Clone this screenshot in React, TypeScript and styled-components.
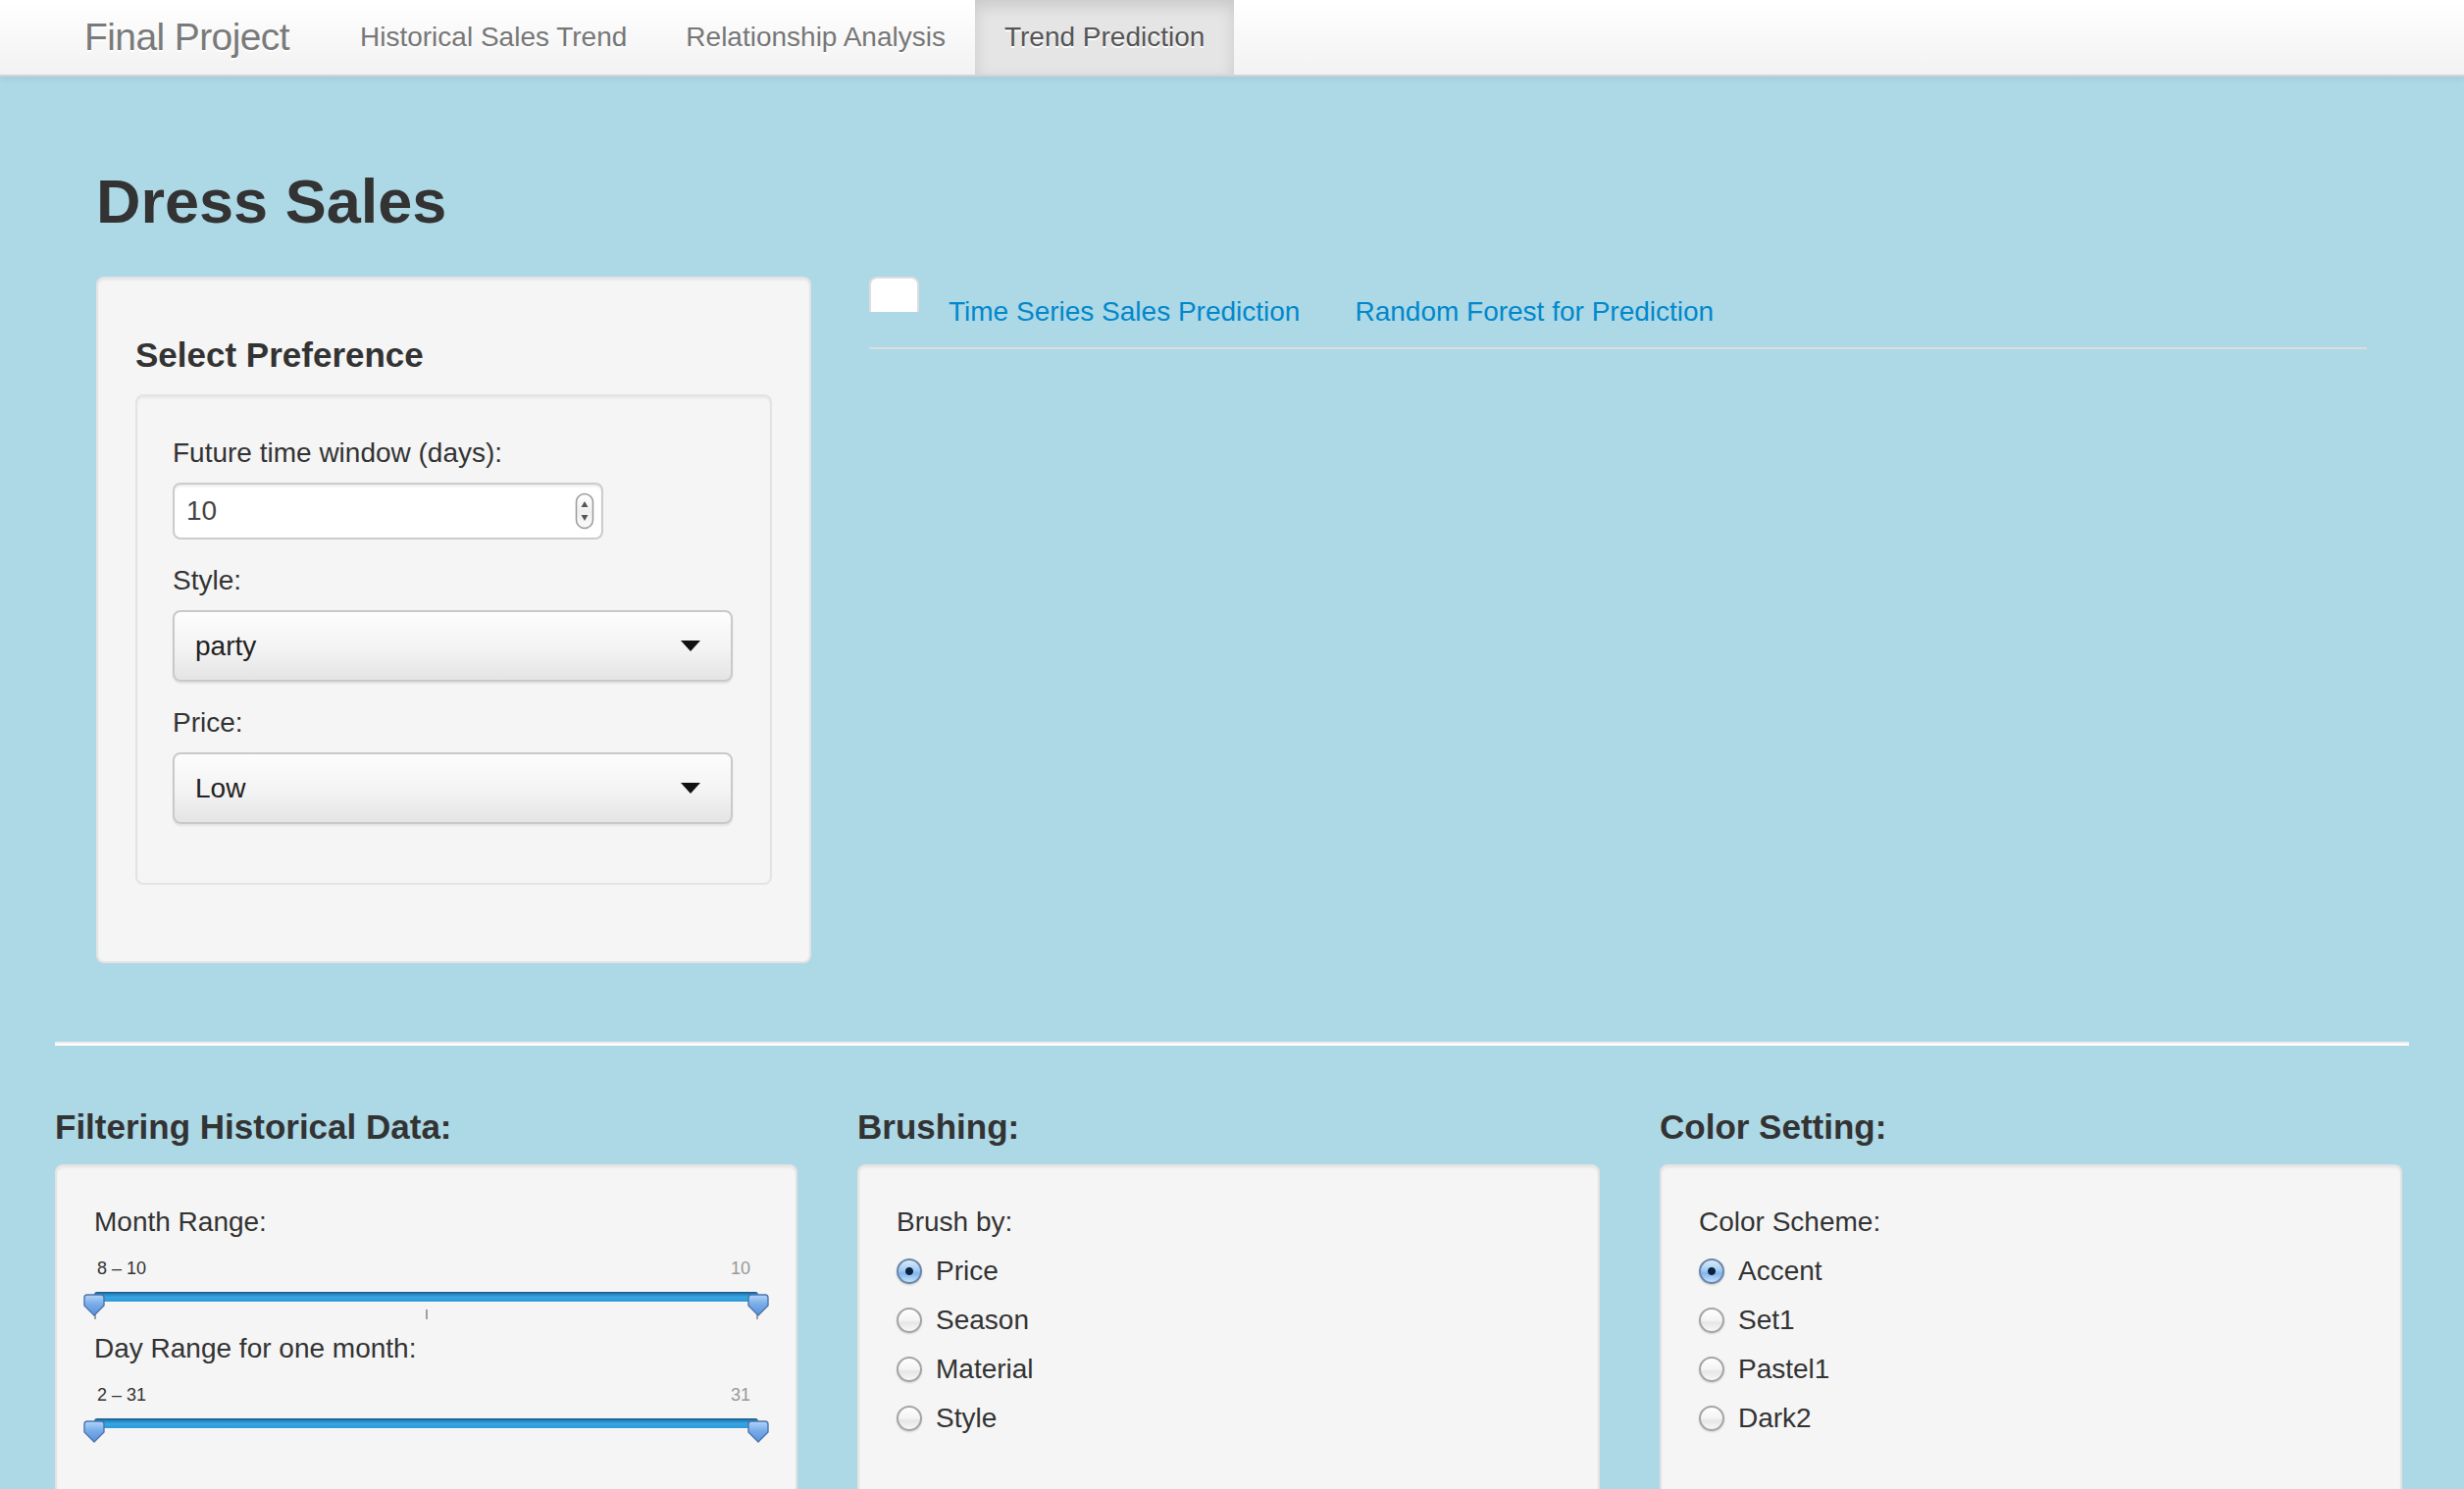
import React from "react";
import styled, { createGlobalStyle, css } from "styled-components";

const GlobalStyle = createGlobalStyle`
  html, body { margin: 0; padding: 0; overflow: hidden; }
  body {
    background: #add8e6;
    font-family: "Liberation Sans", Arial, Helvetica, sans-serif;
    font-size: 28px;
    line-height: 40px;
    color: #333;
  }
  *, *::before, *::after { box-sizing: border-box; }
`;

/* ---------- Navbar ---------- */
const Navbar = styled.header`
  height: 78px;
  background: linear-gradient(to bottom, #ffffff, #f2f2f2);
  border-bottom: 2px solid #d4d4d4;
  box-shadow: 0 2px 8px rgba(0, 0, 0, 0.065);
  display: flex;
  align-items: stretch;
  padding-left: 86px;
`;

const Brand = styled.a`
  width: 251px;
  display: flex;
  align-items: center;
  font-size: 39px;
  color: #7a7a7a;
  text-shadow: 0 2px 0 #fff;
  letter-spacing: -0.6px;
`;

const NavList = styled.nav`
  display: flex;
  align-items: stretch;
`;

const NavLink = styled.a<{ $active?: boolean }>`
  display: flex;
  align-items: center;
  padding: 0 30px;
  font-size: 28px;
  color: #777;
  text-shadow: 0 2px 0 #fff;
  ${(p) =>
    p.$active &&
    css`
      color: #555;
      background: #e5e5e5;
      box-shadow: inset 0 6px 16px rgba(0, 0, 0, 0.125);
    `}
`;

/* ---------- Layout ---------- */
const Page = styled.main`
  padding: 0 56px;
`;

const TopSection = styled.section`
  padding: 87px 43px 0 42px;
`;

const Title = styled.h2`
  margin: 0 0 37px;
  font-size: 63px;
  line-height: 80px;
  font-weight: bold;
  color: #333;
`;

const SidebarLayout = styled.div`
  display: grid;
  grid-template-columns: 729px 1fr;
  column-gap: 59px;
  align-items: start;
`;

const Well = styled.div`
  background: #f5f5f5;
  border: 2px solid #e3e3e3;
  border-radius: 8px;
  box-shadow: inset 0 2px 2px rgba(0, 0, 0, 0.05);
  padding: 38px;
`;

const InnerWell = styled(Well)`
  padding: 38px 36px;
  margin-bottom: 40px;
`;

const PanelHeading = styled.h4<{ $gap?: number }>`
  margin: 0 0 ${(p) => p.$gap ?? 20}px;
  font-size: 35px;
  line-height: 40px;
  font-weight: bold;
  color: #333;
`;

const SidebarHeading = styled(PanelHeading)`
  margin-top: 20px;
`;

const FieldLabel = styled.label`
  display: block;
  margin-bottom: 10px;
  font-size: 28px;
  line-height: 40px;
  color: #333;
`;

const FieldGroup = styled.div`
  margin-bottom: 22px;
`;

/* numeric input */
const NumberField = styled.div`
  width: 439px;
  height: 58px;
  background: #fff;
  border: 2px solid #cccccc;
  border-radius: 8px;
  box-shadow: inset 0 2px 2px rgba(0, 0, 0, 0.075);
  display: flex;
  align-items: center;
  justify-content: space-between;
  padding: 0 7px 0 12px;
  font-size: 28px;
  color: #444;
`;

/* select */
const SelectBox = styled.div`
  width: 571px;
  height: 73px;
  border: 2px solid #c9c9c9;
  border-radius: 8px;
  background: linear-gradient(to bottom, #fdfdfd 0%, #f3f3f3 55%, #e4e4e4 100%);
  box-shadow: 0 2px 2px rgba(0, 0, 0, 0.08);
  display: flex;
  align-items: center;
  justify-content: space-between;
  padding: 0 31px 0 21px;
  font-size: 28px;
  color: #222;
`;

const Caret = styled.span`
  width: 0;
  height: 0;
  border-left: 10px solid transparent;
  border-right: 10px solid transparent;
  border-top: 11px solid #111;
`;

/* tabs */
const TabBar = styled.div`
  display: flex;
  align-items: flex-start;
  border-bottom: 2px solid #dddddd;
`;

const BlankActiveTab = styled.span`
  display: block;
  width: 51px;
  height: 36px;
  margin-right: 4px;
  background: #fff;
  border: 2px solid #dddddd;
  border-bottom: none;
  border-radius: 8px 8px 0 0;
`;

const TabLink = styled.a`
  display: block;
  margin-right: 4px;
  margin-bottom: -2px;
  padding: 14px 24px 16px;
  border: 2px solid transparent;
  border-radius: 8px 8px 0 0;
  font-size: 28px;
  line-height: 40px;
  color: #0088cc;
`;

/* divider */
const Divider = styled.hr`
  margin: 80px 0 0;
  height: 0;
  border: 0;
  border-top: 2px solid #eeeeee;
  border-bottom: 2px solid #ffffff;
`;

/* bottom row */
const BottomRow = styled.div`
  margin-top: 63px;
  display: grid;
  grid-template-columns: repeat(3, 757px);
  column-gap: 61px;
`;

const Column = styled.section`
  display: flex;
  flex-direction: column;
`;

const ColumnWell = styled(Well)`
  flex: 1;
  padding-top: 37px;
`;

/* slider */
const SliderWrap = styled.div`
  height: 79px;
  padding-top: 7px;
`;

const SliderValues = styled.div`
  display: flex;
  justify-content: space-between;
  height: 20px;
  font-size: 18px;
  line-height: 20px;
  padding: 0 8px 0 3px;
`;

const SliderValue = styled.span<{ $muted?: boolean }>`
  color: ${(p) => (p.$muted ? "#999" : "#333")};
`;

const Track = styled.div`
  position: relative;
  margin-top: 14px;
  height: 10px;
  border-radius: 3px;
  background: linear-gradient(to bottom, #17557f 0%, #2586c2 25%, #38a6e2 55%, #2e98d6 100%);
  box-shadow: 0 1px 0 rgba(255, 255, 255, 0.6);
`;

const Pointer = styled.span`
  position: absolute;
  top: -4px;
  width: 22px;
  height: 23px;
  margin-left: -11px;
  display: block;
`;

const Ticks = styled.div`
  display: flex;
  justify-content: space-between;
  margin-top: 8px;
  height: 10px;
`;

const Tick = styled.span`
  width: 2px;
  height: 10px;
  background: #a0a0a0;
`;

/* radios */
const RadioList = styled.div`
  display: flex;
  flex-direction: column;
  gap: 10px;
`;

const RadioRow = styled.label`
  display: flex;
  align-items: center;
  gap: 14px;
  height: 40px;
  font-size: 28px;
  color: #333;
`;

const RadioDot = styled.span<{ $checked?: boolean }>`
  width: 26px;
  height: 26px;
  border-radius: 50%;
  flex: none;
  ${(p) =>
    p.$checked
      ? css`
          border: 2px solid #6a86a8;
          background: radial-gradient(circle at 50% 50%, #0c2340 0, #0c2340 3.5px, transparent 4.5px),
            linear-gradient(to bottom, #d9ebfc 0%, #a3cbf3 45%, #82b6ee 60%, #c4e0fa 100%);
          box-shadow: 0 1px 2px rgba(0, 0, 0, 0.2);
        `
      : css`
          border: 2px solid #a4a4a4;
          background: linear-gradient(to bottom, #ffffff 0%, #f3f3f3 50%, #e6e6e6 60%, #f7f7f7 100%);
          box-shadow: 0 1px 2px rgba(0, 0, 0, 0.15);
        `}
`;

/* ---------- small drawings ---------- */
const Spinner = () => (
  <svg width="20" height="38" viewBox="0 0 20 38" aria-hidden>
    <defs>
      <linearGradient id="spin-bg" x1="0" y1="0" x2="0" y2="1">
        <stop offset="0" stopColor="#ffffff" />
        <stop offset="0.5" stopColor="#f0f0f0" />
        <stop offset="1" stopColor="#fafafa" />
      </linearGradient>
    </defs>
    <rect x="1.5" y="1.5" width="17" height="35" rx="8.5" fill="url(#spin-bg)" stroke="#9a9a9a" strokeWidth="1.5" />
    <path d="M10 9 L13.5 15 H6.5 Z" fill="#555" />
    <path d="M10 29 L13.5 23 H6.5 Z" fill="#555" />
  </svg>
);

const PointerShape = ({ id }: { id: string }) => (
  <svg width="22" height="23" viewBox="0 0 22 23" aria-hidden>
    <defs>
      <linearGradient id={id} x1="0" y1="0" x2="0" y2="1">
        <stop offset="0" stopColor="#b3d5f8" />
        <stop offset="0.45" stopColor="#78ace9" />
        <stop offset="1" stopColor="#5a90da" />
      </linearGradient>
    </defs>
    <path
      d="M4 1 H18 Q21 1 21 4 V12 L11 22 L1 12 V4 Q1 1 4 1 Z"
      fill={`url(#${id})`}
      stroke="#4a74ad"
      strokeWidth="1.4"
    />
  </svg>
);

/* ---------- composite pieces ---------- */
type RangeSliderProps = {
  id: string;
  from: number;
  to: number;
  min: number;
  max: number;
  ticks?: number;
};

const RangeSlider = ({ id, from, to, min, max, ticks = 0 }: RangeSliderProps) => {
  const span = max - min || 1;
  const left = ((from - min) / span) * 100;
  const right = ((to - min) / span) * 100;
  return (
    <SliderWrap>
      <SliderValues>
        <SliderValue>
          {from} – {to}
        </SliderValue>
        <SliderValue $muted>{max}</SliderValue>
      </SliderValues>
      <Track>
        <Pointer style={{ left: `${left}%` }}>
          <PointerShape id={`${id}-a`} />
        </Pointer>
        <Pointer style={{ left: `${right}%` }}>
          <PointerShape id={`${id}-b`} />
        </Pointer>
      </Track>
      {ticks > 0 && (
        <Ticks>
          {Array.from({ length: ticks }).map((_, i) => (
            <Tick key={i} />
          ))}
        </Ticks>
      )}
    </SliderWrap>
  );
};

const RadioGroup = ({ label, options, selected }: { label: string; options: string[]; selected: string }) => (
  <>
    <FieldLabel>{label}</FieldLabel>
    <RadioList>
      {options.map((o) => (
        <RadioRow key={o}>
          <RadioDot $checked={o === selected} />
          {o}
        </RadioRow>
      ))}
    </RadioList>
  </>
);

export default function App() {
  return (
    <>
      <GlobalStyle />
      <Navbar>
        <Brand>Final Project</Brand>
        <NavList>
          <NavLink>Historical Sales Trend</NavLink>
          <NavLink>Relationship Analysis</NavLink>
          <NavLink $active>Trend Prediction</NavLink>
        </NavList>
      </Navbar>

      <Page>
        <TopSection>
          <Title>Dress Sales</Title>
          <SidebarLayout>
            <Well>
              <SidebarHeading>Select Preference</SidebarHeading>
              <InnerWell>
                <FieldGroup>
                  <FieldLabel>Future time window (days):</FieldLabel>
                  <NumberField>
                    <span>10</span>
                    <Spinner />
                  </NumberField>
                </FieldGroup>
                <FieldGroup>
                  <FieldLabel>Style:</FieldLabel>
                  <SelectBox>
                    <span>party</span>
                    <Caret />
                  </SelectBox>
                </FieldGroup>
                <FieldGroup>
                  <FieldLabel>Price:</FieldLabel>
                  <SelectBox>
                    <span>Low</span>
                    <Caret />
                  </SelectBox>
                </FieldGroup>
              </InnerWell>
            </Well>

            <div>
              <TabBar>
                <BlankActiveTab />
                <TabLink>Time Series Sales Prediction</TabLink>
                <TabLink>Random Forest for Prediction</TabLink>
              </TabBar>
            </div>
          </SidebarLayout>
        </TopSection>

        <Divider />

        <BottomRow>
          <Column>
            <PanelHeading $gap={18}>Filtering Historical Data:</PanelHeading>
            <ColumnWell>
              <FieldLabel>Month Range:</FieldLabel>
              <RangeSlider id="month" from={8} to={10} min={8} max={10} ticks={3} />
              <FieldLabel>Day Range for one month:</FieldLabel>
              <RangeSlider id="day" from={2} to={31} min={2} max={31} />
            </ColumnWell>
          </Column>
          <Column>
            <PanelHeading $gap={18}>Brushing:</PanelHeading>
            <ColumnWell>
              <RadioGroup label="Brush by:" options={["Price", "Season", "Material", "Style"]} selected="Price" />
            </ColumnWell>
          </Column>
          <Column>
            <PanelHeading $gap={18}>Color Setting:</PanelHeading>
            <ColumnWell>
              <RadioGroup label="Color Scheme:" options={["Accent", "Set1", "Pastel1", "Dark2"]} selected="Accent" />
            </ColumnWell>
          </Column>
        </BottomRow>
      </Page>
    </>
  );
}
